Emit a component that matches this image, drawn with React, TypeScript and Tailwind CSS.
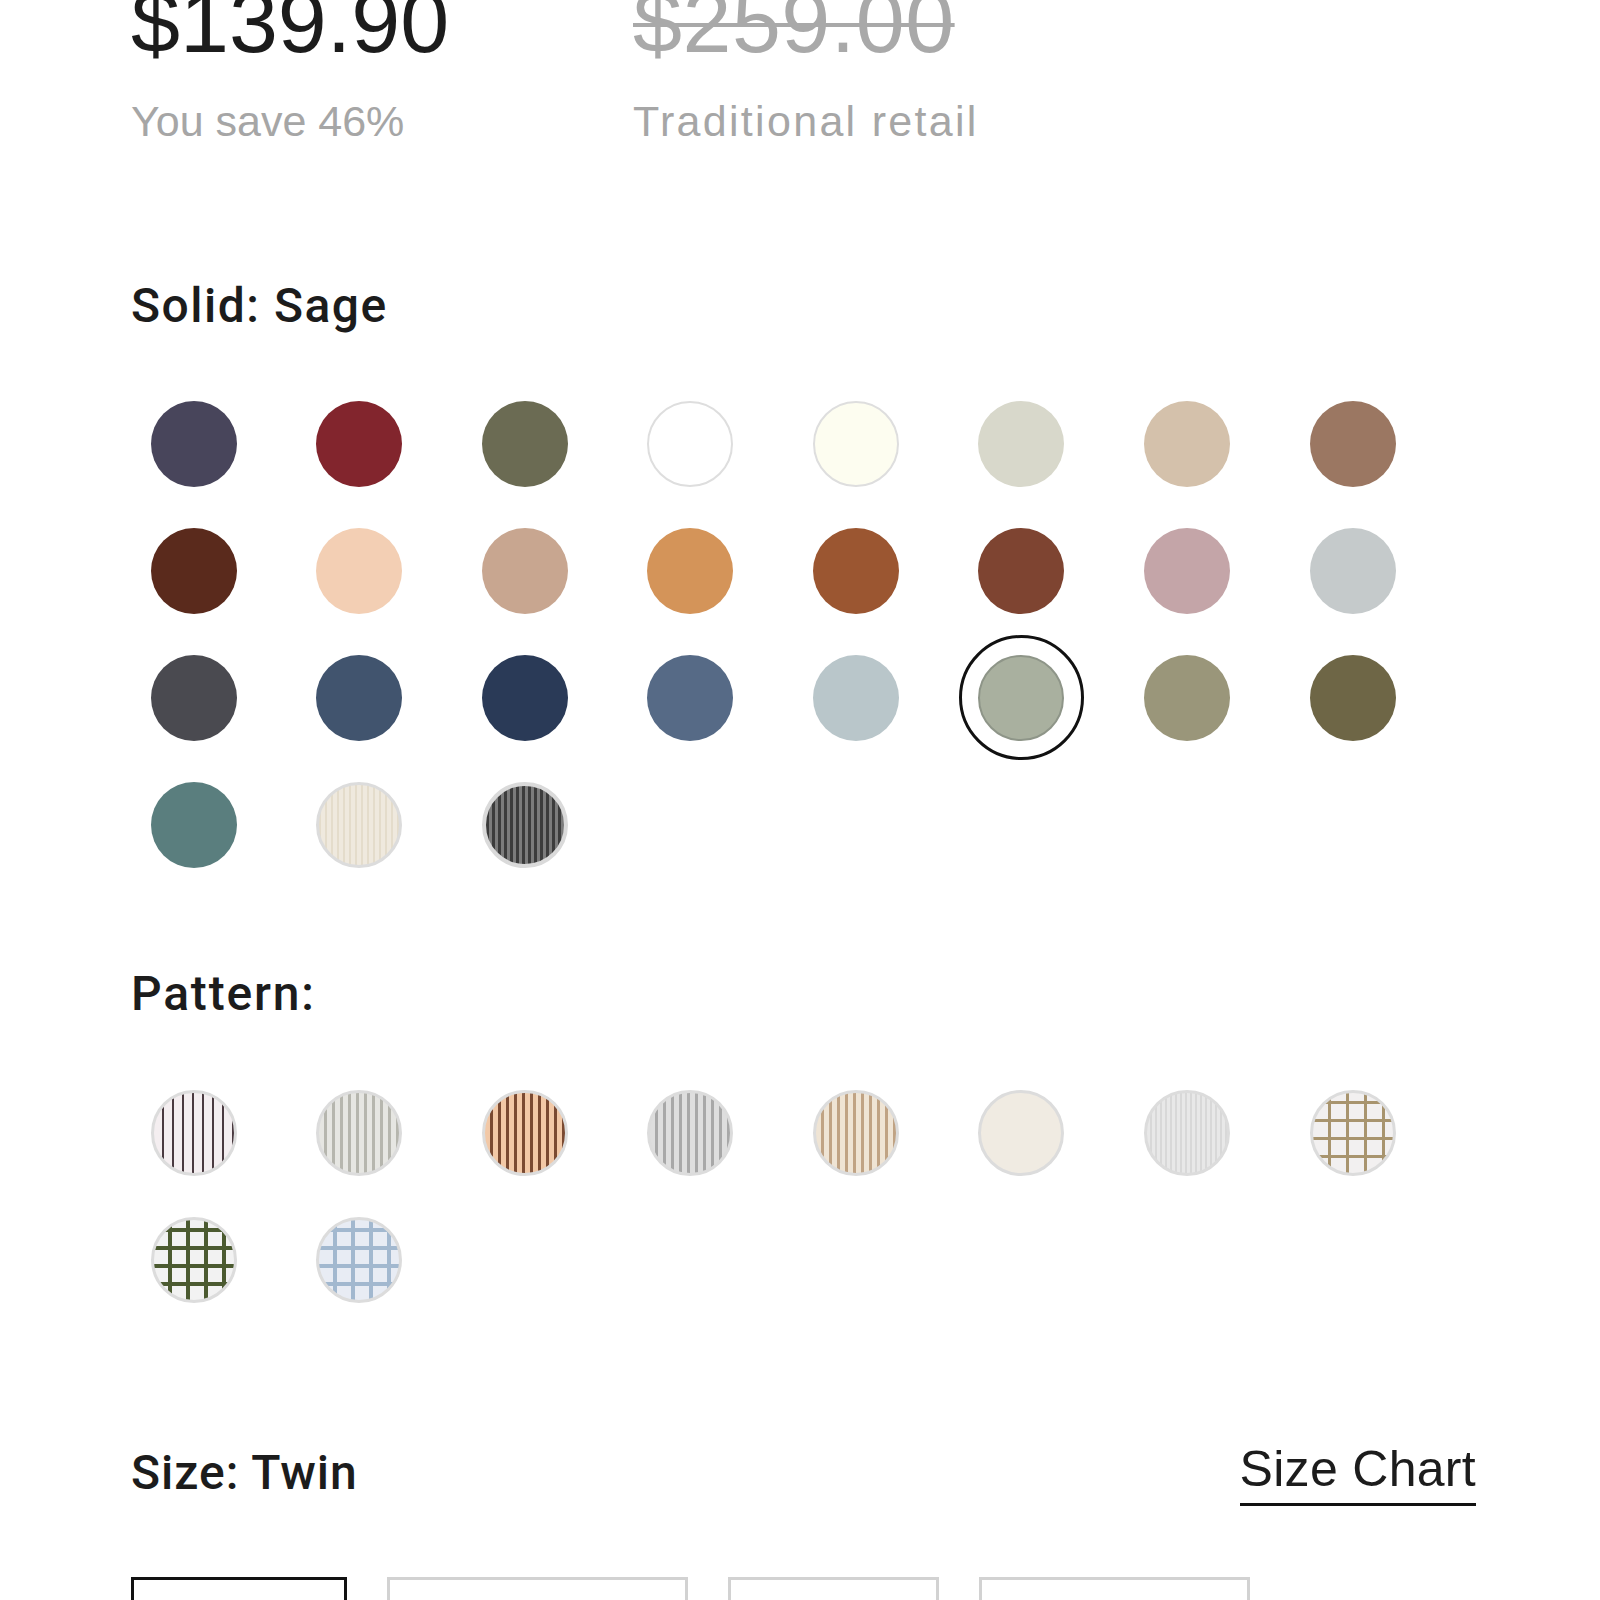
import React from "react";

type Swatch = { name: string; cls: string };

const solids: Swatch[] = [
  { name: "Navy", cls: "bg-[#48455b]" },
  { name: "Merlot", cls: "bg-[#82252d]" },
  { name: "Olive", cls: "bg-[#6b6b53]" },
  { name: "White", cls: "bg-white border-2 border-[#dedede]" },
  { name: "Ivory", cls: "bg-[#fdfdf0] border-2 border-[#dedede]" },
  { name: "Fog", cls: "bg-[#d8d8cb]" },
  { name: "Sand", cls: "bg-[#d4c1ab]" },
  { name: "Mocha", cls: "bg-[#9b7762]" },
  { name: "Chocolate", cls: "bg-[#5a2a1c]" },
  { name: "Peach", cls: "bg-[#f3cfb4]" },
  { name: "Nude", cls: "bg-[#c8a690]" },
  { name: "Apricot", cls: "bg-[#d49459]" },
  { name: "Rust", cls: "bg-[#9b5631]" },
  { name: "Cinnamon", cls: "bg-[#7e4431]" },
  { name: "Rose", cls: "bg-[#c4a5a8]" },
  { name: "Mist", cls: "bg-[#c5cacb]" },
  { name: "Charcoal", cls: "bg-[#4a4a50]" },
  { name: "Denim", cls: "bg-[#41546e]" },
  { name: "Midnight", cls: "bg-[#2a3a57]" },
  { name: "Steel", cls: "bg-[#566a86]" },
  { name: "Sky", cls: "bg-[#b9c6ca]" },
  { name: "Sage", cls: "bg-[#a9b09f]" },
  { name: "Moss", cls: "bg-[#9a967a]" },
  { name: "Bark", cls: "bg-[#6e6646]" },
  { name: "Teal", cls: "bg-[#5a7e7e]" },
  {
    name: "Oat Stripe",
    cls: "border-[3px] border-[#dcdcdc] bg-[repeating-linear-gradient(90deg,#e4dccb_0_2px,#efe9de_2px_6px)]",
  },
  {
    name: "Slate Stripe",
    cls: "border-[4px] border-[#dadada] bg-[repeating-linear-gradient(90deg,#3c3c3c_0_3px,#7c7c7c_3px_6px)]",
  },
];

const patterns: Swatch[] = [
  {
    name: "Pinstripe",
    cls: "bg-[repeating-linear-gradient(90deg,#f4eef0_0_8px,#4a3a40_8px_10px)]",
  },
  {
    name: "Grey Ticking",
    cls: "bg-[repeating-linear-gradient(90deg,#e6e6e2_0_5px,#b6b6ae_5px_8px)]",
  },
  {
    name: "Copper Stripe",
    cls: "bg-[repeating-linear-gradient(90deg,#f2c8a6_0_5px,#7a4a32_5px_8px)]",
  },
  {
    name: "Ash Stripe",
    cls: "bg-[repeating-linear-gradient(90deg,#dedede_0_5px,#a8a8a8_5px_8px)]",
  },
  {
    name: "Wheat Stripe",
    cls: "bg-[repeating-linear-gradient(90deg,#efe4d4_0_5px,#c0a384_5px_8px)]",
  },
  { name: "Linen", cls: "bg-[#f0ebe2]" },
  {
    name: "Heather",
    cls: "bg-[repeating-linear-gradient(90deg,#e8e8e8_0_3px,#d8d8d8_3px_5px)]",
  },
  {
    name: "Tan Check",
    cls: "bg-[#f2f0f0] bg-[image:repeating-linear-gradient(90deg,transparent_0_15px,#a8946e_15px_18px),repeating-linear-gradient(0deg,transparent_0_15px,#a8946e_15px_18px)]",
  },
  {
    name: "Olive Check",
    cls: "bg-[#f2f2f2] bg-[image:repeating-linear-gradient(90deg,transparent_0_14px,#4b5a30_14px_18px),repeating-linear-gradient(0deg,transparent_0_14px,#4b5a30_14px_18px)]",
  },
  {
    name: "Blue Check",
    cls: "bg-[#e8ecf4] bg-[image:repeating-linear-gradient(90deg,transparent_0_14px,#a2b8cf_14px_18px),repeating-linear-gradient(0deg,transparent_0_14px,#a2b8cf_14px_18px)]",
  },
];

function SwatchGrid({
  items,
  selected,
  ringed,
}: {
  items: Swatch[];
  selected?: string;
  ringed?: boolean;
}) {
  return (
    <div className="grid grid-cols-[repeat(8,125px)] gap-x-[40.6px] gap-y-[2px]">
      {items.map((s) => (
        <button
          key={s.name}
          title={s.name}
          className={`w-[125px] h-[125px] rounded-full flex items-center justify-center ${
            selected === s.name ? "border-[3px] border-[#111]" : ""
          }`}
        >
          <span
            className={`block w-[86px] h-[86px] rounded-full ${s.cls} ${
              ringed ? "border-[3px] border-[#dcdcdc]" : ""
            } ${selected === s.name ? "border-2 border-[#8e9588]" : ""}`}
          />
        </button>
      ))}
    </div>
  );
}

export default function App() {
  return (
    <div className="w-[1600px] h-[1600px] overflow-hidden bg-white pl-[131px] pr-[124px] font-['Liberation_Sans',Arial,sans-serif] text-[#1c1c1c]">
      {/* prices */}
      <div className="flex mt-[-22px]">
        <div className="w-[502px]">
          <div className="text-[88px] leading-[88px]">$139.90</div>
          <div className="mt-[34px] text-[43px] leading-[43px] text-[#a6a6a6]">
            You save 46%
          </div>
        </div>
        <div>
          <div className="text-[88px] leading-[88px] tracking-[0.5px] text-[#a9a9a9] line-through decoration-[4px]">
            $259.00
          </div>
          <div className="mt-[34px] text-[43px] leading-[43px] text-[#a6a6a6] tracking-[2.3px]">
            Traditional retail
          </div>
        </div>
      </div>

      <h2 className="mt-[139px] text-[48px] leading-[48px] tracking-[1.5px] font-medium font-['Roboto',Arial,sans-serif]">
        Solid: Sage
      </h2>
      <div className="mt-[51px]">
        <SwatchGrid items={solids} selected="Sage" />
      </div>

      <h2 className="mt-[83px] text-[48px] leading-[48px] tracking-[1.8px] font-medium font-['Roboto',Arial,sans-serif]">
        Pattern:
      </h2>
      <div className="mt-[52px]">
        <SwatchGrid items={patterns} ringed />
      </div>

      <div className="mt-[127px] flex items-start justify-between">
        <h2 className="text-[48px] leading-[48px] tracking-[1px] font-medium font-['Roboto',Arial,sans-serif]">
          Size: Twin
        </h2>
        <a className="text-[50px] leading-[48px] tracking-[0.3px] border-b-[3px] border-[#111] pb-[10px] mt-[-4px]">
          Size Chart
        </a>
      </div>

      <div className="mt-[71px] flex gap-[40px]">
        <button className="w-[216px] h-[100px] border-[3px] border-[#111]" />
        <button className="w-[301px] h-[100px] border-[3px] border-[#d2d2d2]" />
        <button className="w-[211px] h-[100px] border-[3px] border-[#d2d2d2]" />
        <button className="w-[271px] h-[100px] border-[3px] border-[#d2d2d2]" />
      </div>
    </div>
  );
}
